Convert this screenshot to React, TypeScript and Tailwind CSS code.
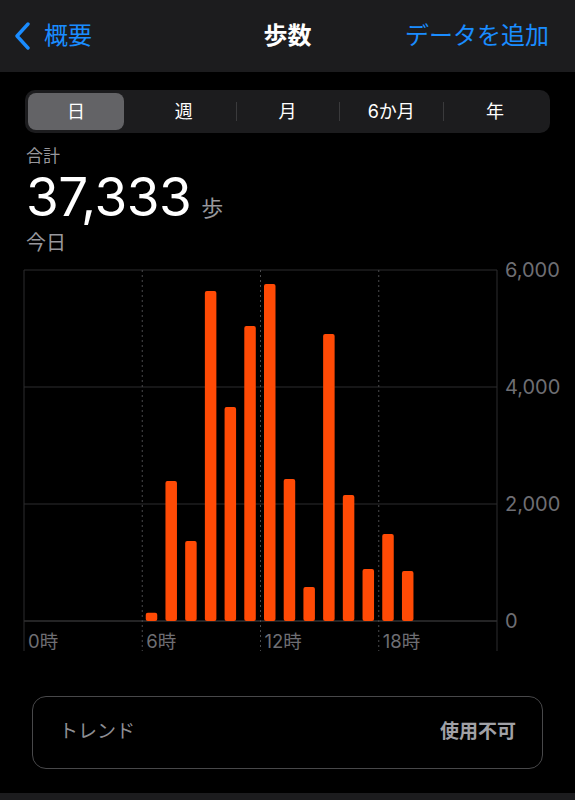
const hours: number[] = [
  0, 0, 0, 0, 0, 0, 140, 2393, 1368, 5641, 3658, 5043, 5760, 2427, 581, 4906, 2154, 889, 1487, 855, 0, 0, 0, 0,
];

const LEFT = 24;
const RIGHT = 497;
const SLOT = (RIGHT - LEFT) / 24;
const TOP = 14;
const BASE = 365;
const yOf = (v: number) => BASE - (v / 6000) * (BASE - TOP);

function StepsChart() {
  const grid = [6000, 4000, 2000];
  return (
    <svg width="575" height="400" className="block font-['Inter','Noto_Sans_CJK_JP',sans-serif]">
      {grid.map((g) => (
        <line key={g} x1={LEFT} x2={RIGHT} y1={yOf(g)} y2={yOf(g)} stroke="#2c2c2e" strokeWidth="1" />
      ))}
      <line x1={LEFT} x2={RIGHT} y1={BASE} y2={BASE} stroke="#48484a" strokeWidth="1.2" />
      <line x1={LEFT} x2={LEFT} y1={TOP} y2={395} stroke="#2c2c2e" strokeWidth="1" />
      <line x1={RIGHT} x2={RIGHT} y1={TOP} y2={395} stroke="#2c2c2e" strokeWidth="1" />
      {[6, 12, 18].map((h) => (
        <line
          key={h}
          x1={LEFT + h * SLOT}
          x2={LEFT + h * SLOT}
          y1={TOP}
          y2={395}
          stroke="#4a4a4c"
          strokeWidth="1"
          strokeDasharray="2 3"
        />
      ))}
      {hours.map((v, i) =>
        v > 0 ? (
          <rect
            key={i}
            x={LEFT + i * SLOT + 3.5}
            y={yOf(v)}
            width="11.5"
            height={BASE - yOf(v)}
            rx="2"
            fill="#ff4a05"
          />
        ) : null
      )}
      {[
        { v: "6,000", y: yOf(6000) },
        { v: "4,000", y: yOf(4000) },
        { v: "2,000", y: yOf(2000) },
        { v: "0", y: BASE },
      ].map((l) => (
        <text key={l.v} x="505" y={l.y + 7} fill="#6e6e73" fontSize="20">
          {l.v}
        </text>
      ))}
      {[0, 6, 12, 18].map((h) => (
        <text key={h} x={LEFT + h * SLOT + 4} y="392" fill="#6e6e73" fontSize="18.5">
          {h}時
        </text>
      ))}
    </svg>
  );
}

export default function App() {
  const segments = ["日", "週", "月", "6か月", "年"];
  return (
    <div className="w-[575px] h-[800px] bg-black overflow-hidden flex flex-col font-['Inter','Noto_Sans_CJK_JP',sans-serif]">
      {/* ナビゲーションバー */}
      <div className="h-[72px] shrink-0 bg-[#1c1c1e] grid grid-cols-[1fr_auto_1fr] items-center">
        <div className="flex items-center pl-[14px] gap-[12px] text-[#1a8cff] text-[24px]">
          <svg width="18" height="28" viewBox="0 0 18 28" fill="none">
            <path d="M14 2 L3 14 L14 26" stroke="#1a8cff" strokeWidth="3.4" strokeLinecap="round" strokeLinejoin="round" />
          </svg>
          <span>概要</span>
        </div>
        <div className="text-white text-[24px] font-bold">歩数</div>
        <div className="text-right pr-[26px] text-[#1a8cff] text-[24px]">データを追加</div>
      </div>

      {/* セグメント */}
      <div className="mx-[25px] mt-[18px] h-[43px] rounded-[10px] bg-[#1c1c1e] p-[3px] flex items-stretch">
        {segments.map((s, i) => (
          <div key={s} className="flex-1 flex items-center relative">
            {i > 1 && <div className="absolute left-0 top-[9px] bottom-[9px] w-px bg-[#3a3a3c]" />}
            <div
              className={
                "h-full flex items-center justify-center text-[18px] text-white rounded-[8px] " +
                (i === 0 ? "w-[96px] bg-[#636366]" : "flex-1")
              }
            >
              {s}
            </div>
          </div>
        ))}
      </div>

      {/* 合計 */}
      <div className="px-[26px] mt-[12px] flex flex-col">
        <div className="text-[17px] leading-[22px] text-[#98989d]">合計</div>
        <div className="flex items-baseline gap-[10px] h-[60px]">
          <span className="text-[53px] leading-[60px] text-white tracking-[-0.5px]">37,333</span>
          <span className="text-[22px] text-[#98989d]">歩</span>
        </div>
        <div className="mt-[3px] text-[20px] leading-[26px] text-[#98989d]">今日</div>
      </div>

      <div>
        <StepsChart />
      </div>

      {/* トレンド */}
      <div className="mx-[32px] mt-[40px] h-[73px] rounded-[14px] border-[1.5px] border-[#48484a] flex items-center justify-between px-[26px]">
        <span className="text-[19px] text-[#8e8e93]">トレンド</span>
        <span className="text-[19px] font-semibold text-[#a1a1a6]">使用不可</span>
      </div>

      <div className="mt-auto h-[7px] bg-[#1c1c1e]" />
    </div>
  );
}
